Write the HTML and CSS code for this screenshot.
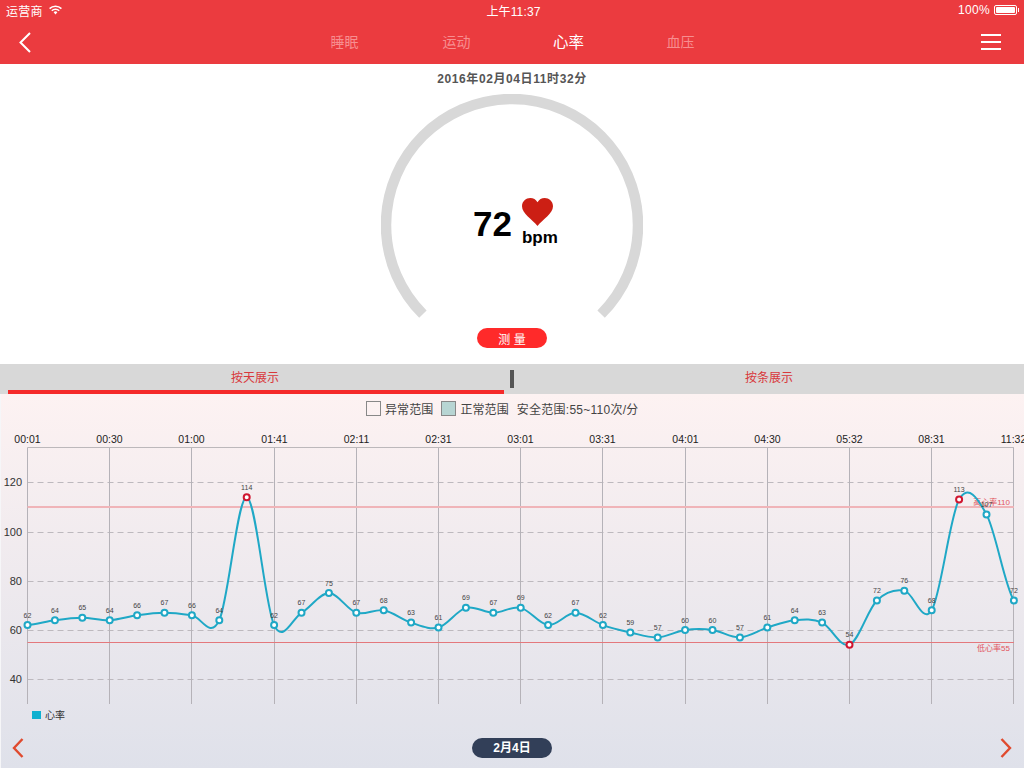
FILE: index.html
```html
<!DOCTYPE html>
<html lang="zh-Hans">
<head>
    <meta charset="UTF-8">
    <meta name="viewport" content="width=device-width, initial-scale=1.0">
    <title>心率</title>
    <link rel="stylesheet" href="styles.css">
</head>
<body>

    <!-- 顶部红色区域 -->
    <header class="topbar">
        <div class="status">
            <div class="status-left">
                <span>运营商</span>
                <svg class="wifi" width="13" height="10" viewBox="0 0 13 10">
                    <path d="M0.6 3.6 A8.4 8.4 0 0 1 12.4 3.6" />
                    <path d="M2.8 5.8 A5.3 5.3 0 0 1 10.2 5.8" />
                    <path class="wifi-dot" d="M4.6 7.2 A2.7 2.7 0 0 1 8.4 7.2 L6.5 9.4 Z" />
                </svg>
            </div>
            <div class="status-time">上午11:37</div>
            <div class="status-right">
                <span>100%</span>
                <div class="battery"><div class="battery-fill"></div></div>
                <div class="battery-nub"></div>
            </div>
        </div>
        <nav class="nav">
            <svg class="back" width="12" height="21" viewBox="0 0 12 21">
                <path d="M11 1 L1.5 10.5 L11 20" />
            </svg>
            <div class="nav-tabs">
                <span class="nav-tab">睡眠</span>
                <span class="nav-tab">运动</span>
                <span class="nav-tab active">心率</span>
                <span class="nav-tab">血压</span>
            </div>
            <div class="menu">
                <span></span>
                <span></span>
                <span></span>
            </div>
        </nav>
    </header>

    <!-- 当前心率 -->
    <section class="hero">
        <div class="date">2016年02月04日11时32分</div>
        <div class="gauge">
            <svg width="262" height="226" viewBox="0 0 262 226">
                <path class="gauge-arc" d="M41.9 220.1 A126 126 0 1 1 220.1 220.1" />
            </svg>
            <div class="reading">
                <div class="reading-value">72</div>
                <div class="reading-unit">
                    <svg width="31" height="28" viewBox="0 0 30 27">
                        <path class="heart" d="M15 27 C10 21 0 15 0 8 C0 3 4 0 8 0 C11 0 13.5 1.5 15 4 C16.5 1.5 19 0 22 0 C26 0 30 3 30 8 C30 15 20 21 15 27 Z" />
                    </svg>
                    <div class="unit-text">bpm</div>
                </div>
            </div>
        </div>
        <button class="measure">测 量</button>
    </section>

    <!-- 展示方式 -->
    <div class="tabs">
        <div class="tab active">按天展示</div>
        <div class="tab-divider"></div>
        <div class="tab">按条展示</div>
    </div>

    <!-- 图表区域 -->
    <section class="panel">
        <div class="range">
            <span class="range-box"></span>
            <span class="range-label">异常范围</span>
            <span class="range-box normal"></span>
            <span class="range-label">正常范围</span>
            <span class="range-safe">安全范围:55~110次/分</span>
        </div>
        <svg id="chart" class="chart" width="1024" height="300" viewBox="0 428 1024 300"></svg>
        <div class="pager">
            <svg class="pager-arrow" width="12" height="20" viewBox="0 0 12 20">
                <path d="M10.5 1 L2 10 L10.5 19" />
            </svg>
            <div class="pager-date">2月4日</div>
            <svg class="pager-arrow" width="12" height="20" viewBox="0 0 12 20">
                <path d="M1.5 1 L10 10 L1.5 19" />
            </svg>
        </div>
    </section>

    <script src="chart.js"></script>
</body>
</html>
```

FILE: styles.css
```css
/* 基本的頁面樣式 */
body {
    margin: 0;
    padding: 0;
    width: 1024px;
    height: 768px;
    overflow: hidden;
    background-color: #fff;
    font-family: "Liberation Sans", "Noto Sans CJK SC", Arial, sans-serif;
}

.topbar {
    height: 64px;
    background-color: #eb3b3f;
    color: #fff;
}

.status {
    display: flex;
    align-items: center;
    justify-content: space-between;
    height: 20px;
    padding: 0 5px 0 6px;
    font-size: 12px;
    letter-spacing: 0.3px;
}

.status-left, .status-right {
    display: flex;
    align-items: center;
    width: 200px;
}

.status-right {
    justify-content: flex-end;
}

.status-time {
    margin-left: 2px;
    letter-spacing: 0.15px;
}

.wifi {
    margin-left: 6px;
}

.wifi path {
    fill: none;
    stroke: #fff;
    stroke-width: 1.6;
}

.wifi .wifi-dot {
    fill: #fff;
    stroke: none;
}

.battery {
    width: 23px;
    height: 10px;
    margin-left: 4px;
    padding: 1px;
    box-sizing: border-box;
    border: 1px solid #fff;
    border-radius: 2px;
}

.battery-fill {
    height: 100%;
    background-color: #fff;
    border-radius: 1px;
}

.battery-nub {
    width: 1px;
    height: 4px;
    margin-left: 1px;
    background-color: #fff;
}

.nav {
    display: flex;
    align-items: center;
    justify-content: space-between;
    height: 44px;
    padding: 0 23px 0 19px;
}

.back path {
    fill: none;
    stroke: #fff;
    stroke-width: 2;
}

.nav-tabs {
    display: flex;
    align-items: center;
    margin-left: 13px;
    margin-top: -2px;
}

.nav-tab {
    width: 112px;
    text-align: center;
    font-size: 14px;
    color: #f78e90;
}

.nav-tab.active {
    font-size: 15.5px;
    color: #fff;
}

.menu {
    display: flex;
    flex-direction: column;
    gap: 5px;
    width: 20px;
}

.menu span {
    height: 2px;
    background-color: #fff;
}

.hero {
    height: 300px;
    padding-top: 7px;
    box-sizing: border-box;
    text-align: center;
}

.date {
    height: 16px;
    line-height: 16px;
    font-size: 12px;
    letter-spacing: 0.6px;
    font-weight: bold;
    color: #555;
}

.gauge {
    position: relative;
    width: 262px;
    height: 226px;
    margin: 7px auto 8px;
}

.gauge svg {
    display: block;
}

.gauge-arc {
    fill: none;
    stroke: #d8d8d8;
    stroke-width: 10.5;
}

.reading {
    position: absolute;
    top: 104px;
    left: 92px;
    display: flex;
    align-items: flex-start;
    gap: 10px;
    text-align: left;
}

.reading-value {
    margin-top: 6px;
    font-size: 35px;
    line-height: 40px;
    font-weight: bold;
    color: #000;
}

.reading-unit svg {
    display: block;
}

.heart {
    fill: #cc1f14;
}

.unit-text {
    margin-top: 4px;
    font-size: 17px;
    line-height: 16px;
    font-weight: bold;
    color: #000;
}

.measure {
    display: block;
    width: 70px;
    height: 20px;
    margin: 0 auto;
    padding: 0;
    border: none;
    border-radius: 10px;
    background-color: #ff2a2a;
    color: #fff;
    font-family: inherit;
    font-size: 12px;
}

.tabs {
    display: flex;
    height: 30px;
    background-color: #d8d8d8;
}

.tab {
    flex: 1;
    line-height: 28px;
    text-align: center;
    font-size: 12px;
    color: #d8393c;
}

.tab.active {
    flex: none;
    width: 494px;
    height: 26px;
    margin-left: 8px;
    padding-right: 2px;
    border-bottom: 4px solid #f52a2a;
}

.tab-divider {
    width: 4px;
    height: 18px;
    margin: 6px 0 0 6px;
    background-color: #555;
}

.panel {
    height: 374px;
    background: linear-gradient(#fdf2f2, #dfe1ea);
    box-shadow: inset 1px 0 0 #f6f6f8;
}

.range {
    display: flex;
    align-items: center;
    height: 29px;
    margin-bottom: 5px;
    padding-left: 366px;
    font-size: 12px;
    letter-spacing: 0.1px;
    color: #444;
}

.range-box {
    width: 15px;
    height: 15px;
    box-sizing: border-box;
    border: 1px solid #888;
}

.range-box.normal {
    margin-left: 8px;
    background-color: #b7d5d3;
}

.range-label {
    margin-left: 4px;
}

.range-safe {
    margin-left: 8px;
    letter-spacing: 0.25px;
}

.chart {
    display: block;
}

.pager {
    display: flex;
    align-items: center;
    justify-content: space-between;
    height: 40px;
    padding: 0 12px;
}

.pager-arrow path {
    fill: none;
    stroke: #e04a2e;
    stroke-width: 2.4;
}

.pager-date {
    width: 80px;
    height: 20px;
    line-height: 20px;
    border-radius: 10px;
    background-color: #323f58;
    color: #fff;
    text-align: center;
    font-size: 12px;
    font-weight: bold;
}

/* 圖表內部 */
.grid-v {
    stroke: #b5b2b8;
    stroke-width: 1;
}

.grid-top {
    stroke: #bcb8bb;
    stroke-width: 1;
}

.grid-h {
    stroke: #bdb9be;
    stroke-width: 1;
    stroke-dasharray: 6 4;
}

.limit-high {
    stroke: #f0b4b8;
    stroke-width: 2;
}

.limit-low {
    stroke: #e4787c;
    stroke-width: 1;
}

.limit-text {
    fill: #e2545c;
    font-size: 8px;
    text-anchor: end;
}

.axis-x {
    fill: #222;
    font-size: 10.5px;
    text-anchor: middle;
}

.axis-y {
    fill: #333;
    font-size: 11px;
    text-anchor: end;
}

.hr-line {
    fill: none;
    stroke: #1fa8c6;
    stroke-width: 2;
}

.hr-label {
    fill: #444;
    font-size: 7px;
    text-anchor: middle;
}

.hr-dot {
    fill: #fff;
    stroke: #1fa8c6;
    stroke-width: 2;
}

.hr-dot.out {
    stroke: #d0152f;
}

.series-key {
    fill: #0fb0d0;
}

.series-text {
    fill: #333;
    font-size: 10px;
}
```

FILE: chart.js
```js
// 心率資料,每 30 分鐘左右一筆
const values = [62, 64, 65, 64, 66, 67, 66, 64, 114, 62, 67, 75, 67, 68, 63, 61, 69, 67, 69,
    62, 67, 62, 59, 57, 60, 60, 57, 61, 64, 63, 54, 72, 76, 68, 113, 107, 72];
const times = ["00:01", "00:30", "01:00", "01:41", "02:11", "02:31", "03:01",
    "03:31", "04:01", "04:30", "05:32", "08:31", "11:32"];

const plotLeft = 27.5;
const plotStep = 27.4;
const plotTop = 447.5;
const plotBottom = 704;
const plotRight = plotLeft + plotStep * (values.length - 1);

const toX = i => plotLeft + plotStep * i;
const toY = v => 630 - (v - 60) * 2.46;

let html = "";

function line(cls, x1, y1, x2, y2) {
    html += `<line class="${cls}" x1="${x1}" y1="${y1}" x2="${x2}" y2="${y2}" />`;
}

function text(cls, x, y, str) {
    html += `<text class="${cls}" x="${x}" y="${y}">${str}</text>`;
}

// 格線與座標
[120, 100, 80, 60, 40].forEach(v => {
    const y = Math.round(toY(v)) + 0.5;
    line("grid-h", plotLeft, y, plotRight, y);
    text("axis-y", 22, y + 3, v);
});

times.forEach((t, i) => {
    const x = Math.round(toX(i * 3) - 0.5) + 0.5;
    line("grid-v", x, plotTop, x, plotBottom);
    text("axis-x", x, 443, t);
});

line("grid-top", plotLeft, plotTop, plotRight, plotTop);

// 心率上下限
line("limit-high", plotLeft, 507, plotRight, 507);
line("limit-low", plotLeft, 642.5, plotRight, 642.5);
text("limit-text", 1010, 505, "高心率110");
text("limit-text", 1010, 651, "低心率55");

// 平滑曲線 (Catmull-Rom)
let d = `M${toX(0)} ${toY(values[0])}`;
for (let i = 0; i < values.length - 1; i++) {
    const prev = values[Math.max(i - 1, 0)];
    const next = values[Math.min(i + 2, values.length - 1)];
    const c1 = toY(values[i] + (values[i + 1] - prev) / 6);
    const c2 = toY(values[i + 1] - (next - values[i]) / 6);
    d += ` C${toX(i + 1 / 3)} ${c1} ${toX(i + 2 / 3)} ${c2} ${toX(i + 1)} ${toY(values[i + 1])}`;
}
html += `<path class="hr-line" d="${d}" />`;

values.forEach((v, i) => {
    text("hr-label", toX(i), toY(v) - 7.5, v);
});

values.forEach((v, i) => {
    const out = v > 110 || v < 55 ? " out" : "";
    html += `<circle class="hr-dot${out}" cx="${toX(i)}" cy="${toY(v)}" r="3" />`;
});

// 圖例
html += `<rect class="series-key" x="32" y="711" width="9" height="8" />`;
text("series-text", 45, 719, "心率");

document.getElementById("chart").innerHTML = html;
```
